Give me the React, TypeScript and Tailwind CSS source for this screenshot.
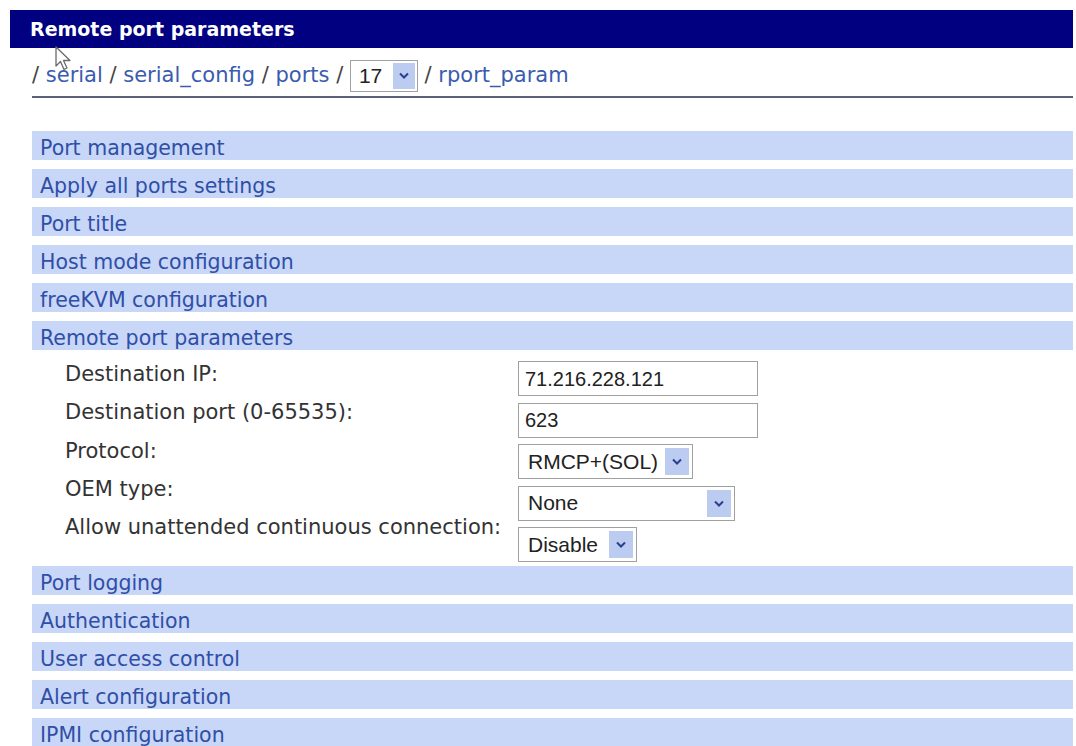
import React from "react";

const verdana = { fontFamily: '"DejaVu Sans", Verdana, sans-serif' };
const arial = { fontFamily: '"Liberation Sans", Arial, sans-serif' };

function Chevron() {
  return (
    <svg width="10" height="7" viewBox="0 0 10 7">
      <path d="M1 1.5 L5 5.5 L9 1.5" fill="none" stroke="#2a3f8f" strokeWidth="2" />
    </svg>
  );
}

function FakeSelect({ value, width }: { value: string; width: string }) {
  return (
    <div className={`flex items-stretch h-[35px] border border-[#a0a0a0] bg-white p-[3px] ${width}`} style={arial}>
      <span className="flex-1 flex items-center pl-[6px] text-[21px] text-[#222]">{value}</span>
      <span className="w-[24px] flex items-center justify-center bg-[#bccbf0]">
        <Chevron />
      </span>
    </div>
  );
}

function TextBox({ value }: { value: string }) {
  return (
    <div
      className="w-[240px] h-[35px] border border-[#a0a0a0] flex items-center pl-[6px] text-[20px] text-[#222]"
      style={arial}
    >
      {value}
    </div>
  );
}

function SectionRow({ label }: { label: string }) {
  return (
    <div className="h-[29px] mb-[9px] bg-[#c8d6f8] flex items-center pl-[8px] pt-[5px] text-[20.5px] text-[#2f4fa6]">
      {label}
    </div>
  );
}

export default function App() {
  const before = [
    "Port management",
    "Apply all ports settings",
    "Port title",
    "Host mode configuration",
    "freeKVM configuration",
    "Remote port parameters",
  ];
  const after = [
    "Port logging",
    "Authentication",
    "User access control",
    "Alert configuration",
    "IPMI configuration",
  ];
  const labels = [
    "Destination IP:",
    "Destination port (0-65535):",
    "Protocol:",
    "OEM type:",
    "Allow unattended continuous connection:",
  ];

  return (
    <div className="relative w-[1076px] h-[746px] overflow-hidden bg-white pl-[10px] pt-[10px]" style={verdana}>
      <div className="w-[1063px] h-[38px] bg-[#000080] flex items-center pl-[20px] text-white font-bold text-[19px]">
        Remote port parameters
      </div>

      <div className="ml-[22px] w-[1041px]">
        <div className="flex items-center h-[32px] mt-[10px] pt-[3px] text-[21px] text-[#444]">
          <span>/&nbsp;</span>
          <span className="text-[#3a5bb0]">serial</span>
          <span>&nbsp;/&nbsp;</span>
          <span className="text-[#3a5bb0]">serial_config</span>
          <span>&nbsp;/&nbsp;</span>
          <span className="text-[#3a5bb0]">ports</span>
          <span>&nbsp;/&nbsp;</span>
          <div className="flex items-stretch h-[32px] w-[68px] border border-[#a0a0a0] bg-white p-[2px]" style={arial}>
            <span className="flex-1 flex items-center pl-[6px] text-[21px] text-[#222]">17</span>
            <span className="w-[22px] flex items-center justify-center bg-[#bccbf0]">
              <Chevron />
            </span>
          </div>
          <span>&nbsp;/&nbsp;</span>
          <span className="text-[#3a5bb0]">rport_param</span>
        </div>
        <div className="mt-[6px] h-[2px] bg-[#5b5f78]" />

        <div className="mt-[33px]">
          {before.map((l) => (
            <SectionRow key={l} label={l} />
          ))}
        </div>

        <div className="-mt-[9px] pt-[11px] h-[216px] flex text-[21px] text-[#333]">
          <div className="w-[486px] pl-[33px] -mt-[2px] flex flex-col">
            {labels.map((l) => (
              <div key={l} className="h-[38.3px]">
                {l}
              </div>
            ))}
          </div>
          <div className="flex flex-col gap-[6.5px]">
            <TextBox value="71.216.228.121" />
            <TextBox value="623" />
            <FakeSelect value="RMCP+(SOL)" width="w-[175px]" />
            <FakeSelect value="None" width="w-[217px]" />
            <FakeSelect value="Disable" width="w-[119px]" />
          </div>
        </div>

        <div>
          {after.map((l) => (
            <SectionRow key={l} label={l} />
          ))}
        </div>
      </div>

      <svg className="absolute left-[55px] top-[46px]" width="18" height="26" viewBox="0 0 18 26">
        <path
          d="M1 1 L1 20 L5.5 15.5 L9 23.5 L12 22 L8.5 14.5 L15 14.5 Z"
          fill="rgba(255,255,255,0.6)"
          stroke="#6b6b6b"
          strokeWidth="1.3"
          strokeLinejoin="round"
        />
      </svg>
    </div>
  );
}
